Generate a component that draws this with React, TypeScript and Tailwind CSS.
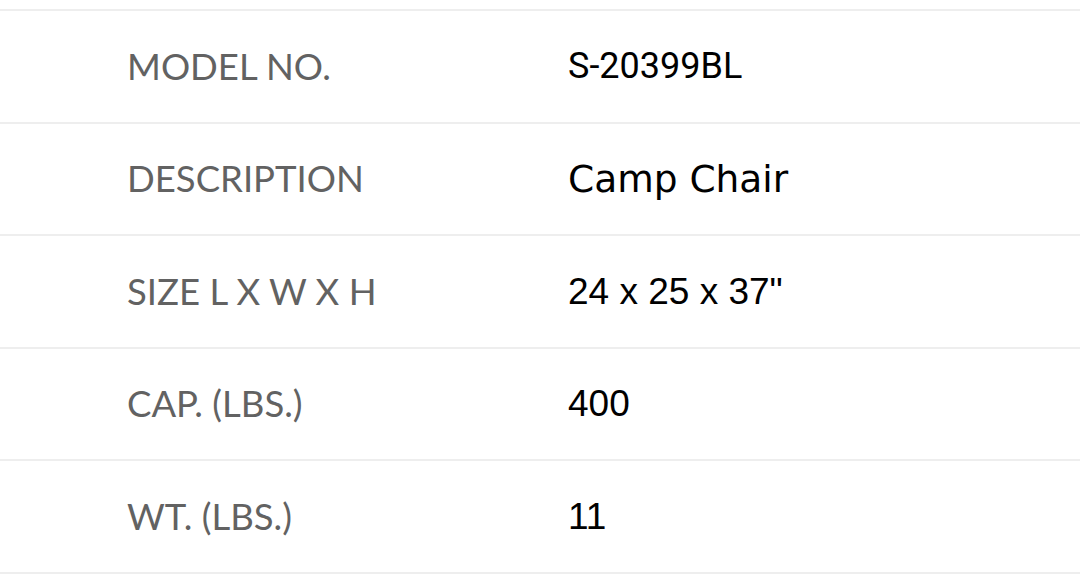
import React from "react";

const rows = [
  { label: "MODEL NO.", value: "S-20399BL", valueClass: "font-['Roboto',sans-serif] text-[36px]" },
  { label: "DESCRIPTION", value: "Camp Chair", valueClass: "font-['DejaVu_Sans',sans-serif] text-[37.5px]" },
  { label: "SIZE L X W X H", value: '24 x 25 x 37"', valueClass: "font-['Liberation_Sans',Arial,sans-serif] text-[37px]" },
  { label: "CAP. (LBS.)", value: "400", valueClass: "font-['Liberation_Sans',Arial,sans-serif] text-[37px]" },
  { label: "WT. (LBS.)", value: "11", valueClass: "font-['Liberation_Sans',Arial,sans-serif] text-[37px]" },
];

export default function App() {
  return (
    <div className="min-h-dvh bg-white pt-[9px]">
      <div className="border-t-2 border-[#eeeeee]">
        {rows.map((r) => (
          <div
            key={r.label}
            className="flex h-[112.5px] items-center border-b-2 border-[#eeeeee] pl-[127px]"
          >
            <div className="w-[441px] shrink-0 font-['Lato',sans-serif] text-[36.5px] text-[#626262]">
              {r.label}
            </div>
            <div className={"text-black " + r.valueClass}>{r.value}</div>
          </div>
        ))}
      </div>
    </div>
  );
}
